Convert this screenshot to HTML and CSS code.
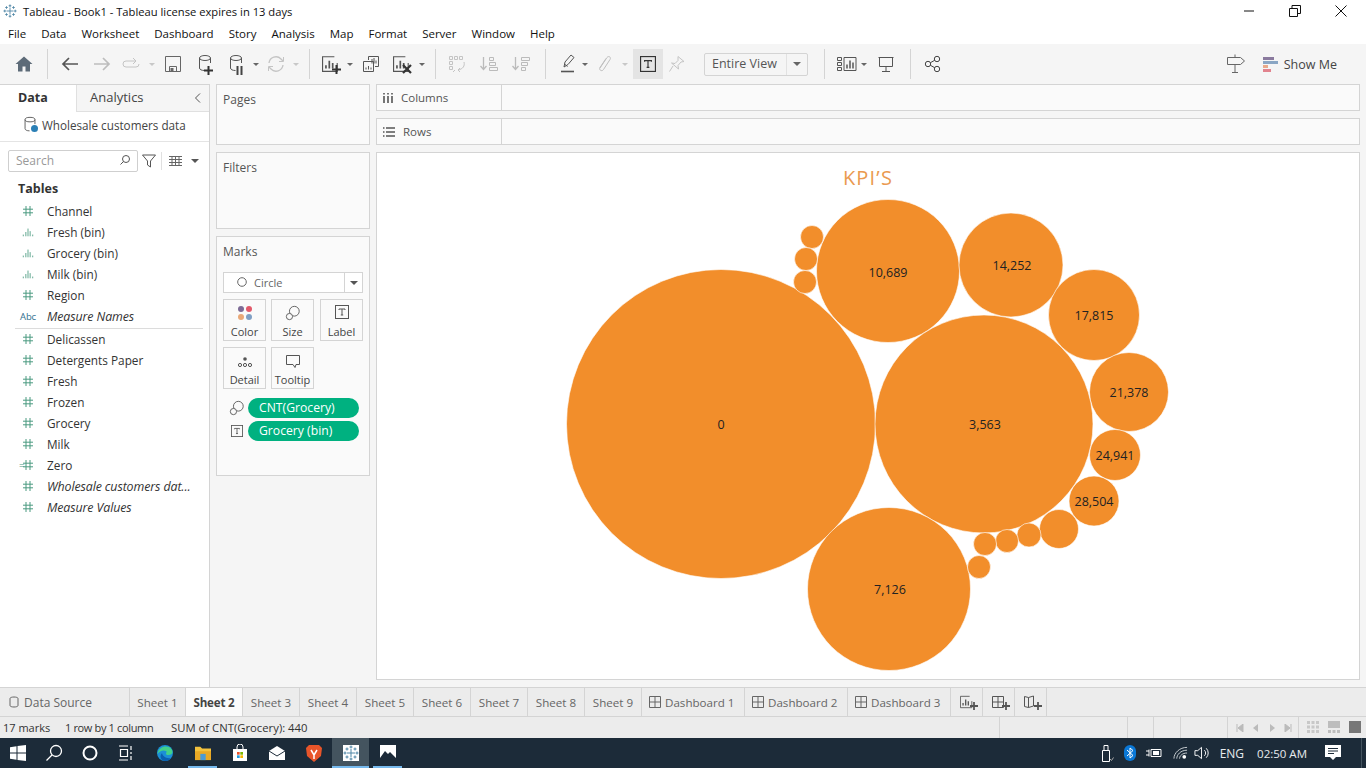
FILE: index.html
```html
<!DOCTYPE html>
<html lang="en">
<head>
  <meta charset="UTF-8" />
  <title>Tableau - Book1</title>
  <link rel="stylesheet" href="styles.css">
</head>
<body>
  <svg class="defs" width="0" height="0">
    <symbol id="logo" viewBox="0 0 16 16">
      <path d="M8 4v8M4 8h8M8 .5v3M6.500 2h3M8 12.500v3M6.500 14h3M.5 8h3M2 6.500v3M12.500 8h3M14 6.500v3M4 2.500v3M2.500 4h3M12 2.500v3M10.500 4h3M4 10.500v3M2.500 12h3M12 10.500v3M10.500 12h3" fill="none" stroke="#4f86a6" stroke-width="1"/>
    </symbol>
    <symbol id="hash" viewBox="0 0 12 12">
      <path d="M4 1v10M8 1v10M1 4.200h10M1 7.800h10" fill="none" stroke="#4a9a80" stroke-width="1"/>
    </symbol>
    <symbol id="bin" viewBox="0 0 14 12">
      <path d="M1.500 9v2M4.500 6v5M7 2v9M9.500 5v6M12.500 9v2" fill="none" stroke="#4a9a80" stroke-width="1"/>
    </symbol>
    <symbol id="size" viewBox="0 0 18 18">
      <circle cx="10.500" cy="7" r="5.500" fill="none" stroke="currentColor"/>
      <circle cx="5" cy="13" r="3.500" fill="#fafafa" stroke="currentColor"/>
    </symbol>
    <symbol id="tbox" viewBox="0 0 14 14">
      <rect x=".5" y=".5" width="13" height="13" fill="none" stroke="currentColor"/>
      <path d="M4 5V4h6v1M7 4v6M5.800 10h2.400" fill="none" stroke="currentColor"/>
    </symbol>
    <symbol id="chart" viewBox="2 2 16 16">
      <path d="M13 3.500H2.500v13h13V9" fill="none" stroke="currentColor"/>
      <path d="M5.500 14v-3M8.500 14V7M11.500 14v-5" fill="none" stroke="currentColor" stroke-width="1.500"/>
    </symbol>
    <symbol id="plus" viewBox="0 0 9 9">
      <path d="M4.500 0v9M0 4.500h9" stroke="currentColor" stroke-width="2"/>
    </symbol>
    <symbol id="cyl" viewBox="0 0 14 20">
      <ellipse cx="7" cy="4" rx="5.500" ry="2.500" fill="none" stroke="currentColor"/>
      <path d="M1.500 4v10c0 1.500 2 2.500 5 2.500M12.500 4v5" fill="none" stroke="currentColor"/>
    </symbol>
  </svg>

  <header class="titlebar">
    <svg class="title-logo"><use href="#logo"/></svg>
    <span class="title-text">Tableau - Book1 - Tableau license expires in 13 days</span>
    <div class="win-btns">
      <svg width="12" height="12" viewBox="0 0 12 12"><path d="M1 6h10" stroke="#111"/></svg>
      <svg width="12" height="12" viewBox="0 0 12 12"><path d="M.5 3.500h8v8h-8zM3 3.500v-3h8.500v8H8.500" fill="none" stroke="#111"/></svg>
      <svg width="12" height="12" viewBox="0 0 12 12"><path d="M.5.5l11 11M11.500.5l-11 11" stroke="#111"/></svg>
    </div>
  </header>

  <nav class="menubar">
    <span>File</span><span>Data</span><span>Worksheet</span><span>Dashboard</span><span>Story</span><span>Analysis</span><span>Map</span><span>Format</span><span>Server</span><span>Window</span><span>Help</span>
  </nav>

  <div class="toolbar">
    <div class="tb w32"><svg width="20" height="20" viewBox="0 0 20 20"><path d="M10 2.500L1.500 10H4v7.500h4.500v-5h3v5H16V10h2.500z" fill="#5d6b78"/></svg></div>
    <i class="sep s1"></i>
    <div class="tb w32"><svg width="20" height="20" viewBox="0 0 20 20"><path d="M18 10H3M9 4l-6 6 6 6" fill="none" stroke="#555" stroke-width="1.700"/></svg></div>
    <div class="tb w32"><svg width="20" height="20" viewBox="0 0 20 20"><path d="M2 10h15M11 4l6 6-6 6" fill="none" stroke="#bdbdbd" stroke-width="1.700"/></svg></div>
    <div class="tb w26"><svg width="20" height="20" viewBox="0 0 20 20"><path d="M14 7H5a3 3 0 0 0 0 6h10a3 3 0 0 0 3-3M12 4l3 3-3 3" fill="none" stroke="#c4c4c4"/></svg></div>
    <div class="tb w16"><b class="caret off"></b></div>
    <div class="tb w26"><svg width="16" height="16" viewBox="0 0 16 16"><path d="M.5.5h15v15H.5zM4.500 15.500v-5h7v5" fill="none" stroke="#666"/><rect x="5.500" y="12" width="3" height="3.500" fill="#666"/></svg></div>
    <div class="tb w38"><span class="stack"><svg class="ic" width="14" height="20"><use href="#cyl"/></svg><svg class="badge" width="9" height="9"><use href="#plus"/></svg></span></div>
    <div class="tb w24"><span class="stack"><svg class="ic" width="14" height="20"><use href="#cyl"/></svg><svg class="badge" width="9" height="9" viewBox="0 0 9 9"><path d="M2.500 0v9M6.500 0v9" stroke="#444" stroke-width="2"/></svg></span></div>
    <div class="tb w16"><b class="caret"></b></div>
    <div class="tb w24"><svg width="20" height="20" viewBox="0 0 20 20"><path d="M3 9a7 7 0 0 1 12-4l2 2M17 11a7 7 0 0 1-12 4l-2-2" fill="none" stroke="#c4c4c4" stroke-width="1.300"/><path d="M17.500 3v4.500H13M2.500 17v-4.500H7" fill="none" stroke="#c4c4c4"/></svg></div>
    <div class="tb w16"><b class="caret off"></b></div>
    <i class="sep s2"></i>
    <div class="tb w30"><span class="stack"><svg class="ic" width="18" height="18"><use href="#chart"/></svg><svg class="badge" width="9" height="9"><use href="#plus"/></svg></span></div>
    <div class="tb w8"><b class="caret"></b></div>
    <div class="tb w34"><svg width="20" height="20" viewBox="0 0 20 20"><path d="M7.500 6V2.500h10v10H14M2.500 7.500h10v10h-10z" fill="#f5f5f5" stroke="#555"/><path d="M11 9.500V5M13 9.500V4M15 9.500V6.500M5 15.500v-2M7.500 15.500v-3.500M10 15.500v-2" stroke="#555"/></svg></div>
    <div class="tb w28"><span class="stack"><svg class="ic" width="18" height="18"><use href="#chart"/></svg><svg class="badge" width="10" height="10" viewBox="0 0 10 10"><path d="M1 1l8 8M9 1L1 9" stroke="#333" stroke-width="2.200"/></svg></span></div>
    <div class="tb w12"><b class="caret"></b></div>
    <i class="sep s1"></i>
    <div class="tb w30"><svg width="20" height="20" viewBox="0 0 20 20"><path d="M2.500 2.500h3v3h-3zM7.500 2.500h3v3h-3zM12.500 2.500h3v3h-3zM2.500 7.500h3v3h-3zM2.500 12.500h3v3h-3z" fill="none" stroke="#c4c4c4"/><path d="M17 8c1 4-1 7-6 8M13 14l-2 2 2 2M6 18l2-2" fill="none" stroke="#c4c4c4"/></svg></div>
    <div class="tb w34"><svg width="20" height="20" viewBox="0 0 20 20"><path d="M4.500 3v12M1.500 12l3 3.500 3-3.500" fill="none" stroke="#bbb" stroke-width="1.300"/><path d="M10.500 3.500h4v3h-4zM10.500 8.500h6v3h-6zM10.500 13.500h8v3h-8z" fill="none" stroke="#bbb"/></svg></div>
    <div class="tb w30"><svg width="20" height="20" viewBox="0 0 20 20"><path d="M4.500 3v12M1.500 12l3 3.500 3-3.500" fill="none" stroke="#bbb" stroke-width="1.300"/><path d="M10.500 3.500h8v3h-8zM10.500 8.500h6v3h-6zM10.500 13.500h4v3h-4z" fill="none" stroke="#bbb"/></svg></div>
    <i class="sep s3"></i>
    <div class="tb w26"><svg width="20" height="22" viewBox="0 0 20 22"><path d="M6 14l1-5 6-7 3 2.500-6 7zM6.500 11l3 2.500" fill="none" stroke="#555"/><path d="M3 18.500h13" stroke="#555" stroke-width="1.600"/></svg></div>
    <div class="tb w8"><b class="caret"></b></div>
    <div class="tb w32"><svg width="18" height="20" viewBox="0 0 18 20"><path d="M4 14L11 3.500C12.500 1.500 15.500 3 14 5.500L7.500 15.500C6 18 2.500 16 4 13.500L10 4.500" fill="none" stroke="#bfbfbf"/></svg></div>
    <div class="tb w8"><b class="caret off"></b></div>
    <div class="tb w30 tb-on"><svg class="ic-dark" width="16" height="16"><use href="#tbox"/></svg></div>
    <div class="tb w28"><svg width="18" height="18" viewBox="0 0 18 18"><path d="M10 1.500l6 5-3 .5-3 3.500.5 3.500-7-6 3.500.5 3-3zM5 11l-3.500 5.500" fill="none" stroke="#c4c4c4"/></svg></div>
    <div class="fit-select"><span>Entire View</span><b class="caret"></b></div>
    <i class="sep s4"></i>
    <div class="tb w24"><svg width="20" height="16" viewBox="0 0 20 16"><path d="M.5 1.500h4v3h-4zM.5 6.500h4v3h-4zM.5 11.500h4v3h-4zM7 1.500h12v13H7z" fill="none" stroke="#555"/><path d="M10 12.500v-4M13 12.500v-8M16 12.500v-6" stroke="#555" stroke-width="1.500"/></svg></div>
    <div class="tb w10"><b class="caret"></b></div>
    <div class="tb w34"><svg width="20" height="20" viewBox="0 0 20 20"><path d="M2.500 3.500h15M3.500 3.500v9h13v-9M10 12.500v5M6 17.500h8" fill="none" stroke="#555"/></svg></div>
    <i class="sep s1b"></i>
    <div class="tb w30"><svg width="18" height="18" viewBox="0 0 18 18"><circle cx="4" cy="9" r="2.700" fill="none" stroke="#444"/><circle cx="13" cy="4" r="2.700" fill="none" stroke="#444"/><circle cx="13" cy="14" r="2.700" fill="none" stroke="#444"/><path d="M6.400 7.700l4.300-2.400M6.400 10.300l4.300 2.400" stroke="#444"/></svg></div>
    <div class="tb-right">
      <svg width="20" height="20" viewBox="0 0 20 20"><path d="M1.500 3.500h13l4 3.500-4 3.500h-13zM9 .5v3M9 10.500v8M6 18.500h6" fill="none" stroke="#666"/></svg>
      <div class="showme">
        <svg width="15" height="15" viewBox="0 0 15 15"><rect width="11" height="3" fill="#8a7a9e"/><rect y="4" width="15" height="3" fill="#8aa6c4"/><rect y="8" width="5" height="3" fill="#e9a98a"/><rect y="12" width="8" height="3" fill="#e2838e"/></svg>
        <span>Show Me</span>
      </div>
    </div>
  </div>

  <main class="main">
    <aside class="sidebar">
      <div class="side-tabs">
        <div class="side-tab active">Data</div>
        <div class="side-tab">Analytics</div>
        <svg class="collapse" width="8" height="10" viewBox="0 0 8 10"><path d="M6 .5L1.500 5 6 9.500" fill="none" stroke="#555"/></svg>
      </div>
      <div class="datasource">
        <span class="stack ds-icon"><svg class="ic" width="14" height="18"><use href="#cyl"/></svg><i class="ds-check"></i></span>
        <span>Wholesale customers data</span>
      </div>
      <div class="search-row">
        <div class="search">
          <span>Search</span>
          <svg width="12" height="12" viewBox="0 0 12 12"><circle cx="7" cy="5" r="3.500" fill="none" stroke="#555"/><path d="M4.500 7.500L1.500 10.500" stroke="#555"/></svg>
        </div>
        <svg class="filter-ic" width="14" height="14" viewBox="0 0 14 14"><path d="M.5 1h13L8.500 7v6l-3-2V7z" fill="none" stroke="#555"/></svg>
        <i class="search-sep"></i>
        <svg width="13" height="10" viewBox="0 0 13 10"><path d="M0 .5h13M0 3.500h13M0 6.500h13M0 9.500h13M3 0v10M6.500 0v10M10 0v10" stroke="#666" stroke-width="1" fill="none"/></svg>
        <b class="caret dark"></b>
      </div>
      <h3 class="tables-head">Tables</h3>
      <ul class="fields">
        <li><svg><use href="#hash"/></svg>Channel</li>
        <li><svg><use href="#bin"/></svg>Fresh (bin)</li>
        <li><svg><use href="#bin"/></svg>Grocery (bin)</li>
        <li><svg><use href="#bin"/></svg>Milk (bin)</li>
        <li><svg><use href="#hash"/></svg>Region</li>
        <li class="calc"><span class="abc">Abc</span>Measure Names</li>
      </ul>
      <hr class="fields-sep">
      <ul class="fields">
        <li><svg><use href="#hash"/></svg>Delicassen</li>
        <li><svg><use href="#hash"/></svg>Detergents Paper</li>
        <li><svg><use href="#hash"/></svg>Fresh</li>
        <li><svg><use href="#hash"/></svg>Frozen</li>
        <li><svg><use href="#hash"/></svg>Grocery</li>
        <li><svg><use href="#hash"/></svg>Milk</li>
        <li><span class="eq">=</span><svg><use href="#hash"/></svg>Zero</li>
        <li class="calc"><svg><use href="#hash"/></svg>Wholesale customers dat...</li>
        <li class="calc"><svg><use href="#hash"/></svg>Measure Values</li>
      </ul>
    </aside>

    <section class="cards">
      <div class="card pages"><h4>Pages</h4></div>
      <div class="card filters"><h4>Filters</h4></div>
      <div class="card marks">
        <h4>Marks</h4>
        <div class="mark-type">
          <svg width="10" height="10" viewBox="0 0 10 10"><circle cx="5" cy="5" r="4.300" fill="none" stroke="#666"/></svg>
          <span>Circle</span>
          <div class="mark-caret"><b class="caret dark"></b></div>
        </div>
        <div class="mark-grid">
          <div class="mark-btn">
            <svg width="16" height="16" viewBox="0 0 16 16"><circle cx="4" cy="4" r="3" fill="#7d6b96"/><circle cx="12" cy="4" r="3" fill="#e2596a"/><circle cx="4" cy="12" r="3" fill="#e9a878"/><circle cx="12" cy="12" r="3" fill="#7f9fc4"/></svg>
            <span>Color</span>
          </div>
          <div class="mark-btn"><svg class="ic" width="16" height="16"><use href="#size"/></svg><span>Size</span></div>
          <div class="mark-btn label-btn"><svg class="ic" width="14" height="14"><use href="#tbox"/></svg><span>Label</span></div>
          <div class="mark-btn">
            <svg width="16" height="16" viewBox="0 0 16 16"><circle cx="8" cy="6" r="1.800" fill="#555"/><circle cx="3" cy="12" r="1.600" fill="none" stroke="#555"/><circle cx="8" cy="12" r="1.600" fill="none" stroke="#555"/><circle cx="13" cy="12" r="1.600" fill="none" stroke="#555"/></svg>
            <span>Detail</span>
          </div>
          <div class="mark-btn">
            <svg width="16" height="16" viewBox="0 0 16 16"><path d="M1.500 2.500h13v9H11l-1 3-2-3H1.500z" fill="none" stroke="#555"/></svg>
            <span>Tooltip</span>
          </div>
        </div>
        <div class="pill-row"><svg class="ic" width="16" height="16"><use href="#size"/></svg><span class="pill">CNT(Grocery)</span></div>
        <div class="pill-row"><svg class="ic pill-t" width="12" height="12"><use href="#tbox"/></svg><span class="pill">Grocery (bin)</span></div>
      </div>
    </section>

    <section class="work">
      <div class="shelf">
        <div class="shelf-label">
          <svg width="10" height="10" viewBox="0 0 10 10"><path d="M1 0v1.500M5 0v1.500M9 0v1.500M1 3v7M5 3v7M9 3v7" stroke="#555" stroke-width="1.600"/></svg>
          <span>Columns</span>
        </div>
      </div>
      <div class="shelf">
        <div class="shelf-label">
          <svg width="12" height="10" viewBox="0 0 12 10"><path d="M0 1h1.500M3 1h9M0 5h1.500M3 5h9M0 9h1.500M3 9h9" stroke="#555" stroke-width="1.600"/></svg>
          <span>Rows</span>
        </div>
      </div>
      <div class="viz">
        <svg class="chart" viewBox="376 152 984 528" width="984" height="528">
          <text class="kpi" x="868" y="185">KPI’S</text>
          <g class="bubbles">
            <circle cx="721" cy="424" r="154.500"/>
            <circle cx="888" cy="271" r="71.500"/>
            <circle cx="1011" cy="265" r="52"/>
            <circle cx="1094" cy="315" r="45.500"/>
            <circle cx="1129" cy="392" r="39.500"/>
            <circle cx="1115" cy="455" r="25.500"/>
            <circle cx="1094" cy="501" r="25"/>
            <circle cx="984" cy="424" r="109"/>
            <circle cx="889" cy="589" r="81.500"/>
            <circle cx="812" cy="237" r="11.500"/>
            <circle cx="806" cy="259" r="11.500"/>
            <circle cx="805" cy="282" r="11.500"/>
            <circle cx="1059" cy="529" r="19.500"/>
            <circle cx="1029" cy="535" r="12"/>
            <circle cx="1007" cy="541" r="11.500"/>
            <circle cx="985" cy="544" r="11.500"/>
            <circle cx="979" cy="567" r="11.500"/>
          </g>
          <g class="labels">
            <text x="721" y="429">0</text>
            <text x="888" y="277">10,689</text>
            <text x="1012" y="270">14,252</text>
            <text x="1094" y="320">17,815</text>
            <text x="1129" y="397">21,378</text>
            <text x="1115" y="460">24,941</text>
            <text x="1094" y="506">28,504</text>
            <text x="985" y="429">3,563</text>
            <text x="890" y="594">7,126</text>
          </g>
        </svg>
      </div>
    </section>
  </main>

  <div class="tabbar">
    <div class="tab ds-tab"><svg class="ic" width="10" height="12" viewBox="0 0 10 12"><path d="M1 2.500C1 .5 9 .5 9 2.500v7c0 2-8 2-8 0z" fill="none" stroke="#666"/></svg>Data Source</div>
    <div class="tab sheet first">Sheet 1</div>
    <div class="tab sheet current">Sheet 2</div>
    <div class="tab sheet">Sheet 3</div>
    <div class="tab sheet">Sheet 4</div>
    <div class="tab sheet">Sheet 5</div>
    <div class="tab sheet">Sheet 6</div>
    <div class="tab sheet">Sheet 7</div>
    <div class="tab sheet">Sheet 8</div>
    <div class="tab sheet">Sheet 9</div>
    <div class="tab dash"><svg width="12" height="12" viewBox="0 0 12 12"><path d="M.5.5h11v11H.5zM6 .5v11M.5 6h11" fill="none" stroke="#666"/></svg>Dashboard 1</div>
    <div class="tab dash"><svg width="12" height="12" viewBox="0 0 12 12"><path d="M.5.5h11v11H.5zM6 .5v11M.5 6h11" fill="none" stroke="#666"/></svg>Dashboard 2</div>
    <div class="tab dash"><svg width="12" height="12" viewBox="0 0 12 12"><path d="M.5.5h11v11H.5zM6 .5v11M.5 6h11" fill="none" stroke="#666"/></svg>Dashboard 3</div>
    <div class="tab add"><span class="stack"><svg class="ic" width="14" height="14"><use href="#chart"/></svg><svg class="badge" width="8" height="8"><use href="#plus"/></svg></span></div>
    <div class="tab add"><span class="stack"><svg class="ic" width="14" height="14" viewBox="0 0 14 14"><path d="M.5 1.500h11v11H.5zM6 1.500v11M.5 7h11" fill="none" stroke="#555"/></svg><svg class="badge" width="8" height="8"><use href="#plus"/></svg></span></div>
    <div class="tab add"><span class="stack"><svg class="ic" width="14" height="14" viewBox="0 0 14 14"><path d="M.5 1.500l4 1 5-1.500v10l-5 1.500-4-1zM4.500 2.500v10" fill="none" stroke="#555"/></svg><svg class="badge" width="8" height="8"><use href="#plus"/></svg></span></div>
  </div>

  <footer class="statusbar">
    <span class="st-marks">17 marks</span>
    <span class="st-rows">1 row by 1 column</span>
    <span>SUM of CNT(Grocery): 440</span>
    <div class="st-cells">
      <i class="c1"></i><i class="c2"></i><i class="c3"></i><i class="c4"></i>
      <div class="st-nav">
        <svg width="8" height="8" viewBox="0 0 8 8"><path d="M1 0v8M7 0v8L2 4z" stroke="#bbb" fill="#bbb"/></svg>
        <svg width="8" height="8" viewBox="0 0 8 8"><path d="M6 0v8L1 4z" fill="#bbb"/></svg>
        <svg width="8" height="8" viewBox="0 0 8 8"><path d="M2 0v8l5-4z" fill="#bbb"/></svg>
        <svg width="8" height="8" viewBox="0 0 8 8"><path d="M7 0v8M1 0v8l5-4z" stroke="#bbb" fill="#bbb"/></svg>
      </div>
      <div class="st-view">
        <svg width="12" height="12" viewBox="0 0 12 12"><path d="M0 0h3v3H0zM4.500 0h3v3h-3zM9 0h3v3H9zM0 4.500h3v3H0zM4.500 4.500h3v3h-3zM9 4.500h3v3H9zM0 9h3v3H0zM4.500 9h3v3h-3zM9 9h3v3H9z" fill="#c8c8c8"/></svg>
        <svg width="12" height="12" viewBox="0 0 12 12"><path d="M0 0h12v7H0zM0 9h3v3H0zM4.500 9h3v3h-3zM9 9h3v3H9z" fill="#bdbdbd"/></svg>
        <svg width="12" height="12" viewBox="0 0 12 12"><path d="M0 0h12v12H0z" fill="#777"/></svg>
      </div>
    </div>
  </footer>

  <div class="taskbar">
    <div class="task narrow"><svg width="16" height="16" viewBox="0 0 16 16"><path d="M0 2.200L6.500 1.300v6.200H0zM7.500 1.100L16 0v7.500H7.500zM0 8.500h6.500v6.200L0 13.800zM7.500 8.500H16V16l-8.500-1.100z" fill="#fff"/></svg></div>
    <div class="task narrow"><svg width="18" height="18" viewBox="0 0 18 18"><circle cx="11" cy="7" r="5.500" fill="none" stroke="#fff" stroke-width="1.300"/><path d="M7 11l-5.500 5.500" stroke="#fff" stroke-width="1.300"/></svg></div>
    <div class="task narrow"><svg width="16" height="16" viewBox="0 0 16 16"><circle cx="8" cy="8" r="6.500" fill="none" stroke="#fff" stroke-width="2"/></svg></div>
    <div class="task narrow"><svg width="16" height="16" viewBox="0 0 16 16"><path d="M1 1h9M1 15h9M2.500 4.500h7v7h-7zM13 1v4M13 7v2M13 11v4" fill="none" stroke="#fff" stroke-width="1.200"/></svg></div>
    <div class="task edge"><svg width="18" height="18" viewBox="0 0 18 18"><circle cx="9" cy="9" r="8" fill="#1b8fd6"/><path d="M1.500 10C2 5 6 2.500 10 2.500c4 0 6.500 3 6.500 5.500 0 2-2 3-4 3-1.500 0-2.500-.5-2.500-1.500S11.500 8 10 7C7 5.500 3.500 7 1.500 10z" fill="#42d18a"/><path d="M6 16c-2-2-2-5 0-7 .5 3 4 6 9 5-2 3-6 4-9 2z" fill="#0a5fb0"/></svg></div>
    <div class="task under"><svg width="18" height="16" viewBox="0 0 20 18"><path d="M1 2h6l2 2h10v13H1z" fill="#f3c23d"/><path d="M1 7h18v10H1z" fill="#e8a925"/><path d="M7 10h6v7H7z" fill="#4a9bd6"/></svg></div>
    <div class="task"><svg width="16" height="18" viewBox="0 0 16 18"><path d="M1 5h14v12H1z" fill="#fff"/><path d="M5 5V3a3 3 0 0 1 6 0v2" fill="none" stroke="#fff"/><path d="M5 8h2.700v2.700H5z" fill="#e8532b"/><path d="M8.300 8H11v2.700H8.300z" fill="#7db700"/><path d="M5 11.300h2.700V14H5z" fill="#1e9be0"/><path d="M8.300 11.300H11V14H8.300z" fill="#f7b500"/></svg></div>
    <div class="task"><svg width="16" height="14" viewBox="0 0 16 14"><path d="M0 5l8-5 8 5v9H0z" fill="#fff"/><path d="M0 5l8 5 8-5" fill="none" stroke="#1c2b39"/></svg></div>
    <div class="task"><svg width="16" height="18" viewBox="0 0 16 18"><path d="M3 1h10l3 3-1 8-7 6-7-6-1-8z" fill="#e8552a"/><path d="M5 6l3 5 3-5M8 11v4" fill="none" stroke="#fff" stroke-width="1.500"/></svg></div>
    <div class="task running"><svg width="16" height="16" viewBox="0 0 16 16"><rect width="16" height="16" fill="#fff"/><use href="#logo"/></svg></div>
    <div class="task under"><svg width="16" height="16" viewBox="0 0 16 16"><rect width="16" height="16" fill="#fff"/><path d="M0 13l5-7 3 3 2-2 6 6v3H0z" fill="#1c2b39"/></svg></div>
    <div class="tray">
      <svg class="t-usb" width="13" height="17" viewBox="0 0 13 17"><path d="M1.500 5.500h7v11h-7zM3 5.500v-5h4v5" fill="none" stroke="#fff"/><path d="M9 14l1.500 1.500 2-3" fill="none" stroke="#aaa"/></svg>
      <span class="bt"><svg width="8" height="12" viewBox="0 0 8 12"><path d="M1 3l6 5.500L4 11V1l3 2.500L1 9" fill="none" stroke="#fff"/></svg></span>
      <svg class="t-power" width="16" height="12" viewBox="0 0 16 12"><path d="M5 2.500h10v7H5zM0 4h3M0 8h3M3 2.500v7" fill="none" stroke="#fff"/><path d="M7 4h6v4H7z" fill="#fff"/></svg>
      <svg class="t-wifi" width="15" height="14" viewBox="0 0 16 14"><path d="M1 13C1 7 7 1 15 1M4 13c0-4 4-9 11-9M7 13c0-3 3-6 8-6" fill="none" stroke="#cfd4d8"/><circle cx="12" cy="11" r="2" fill="#fff"/></svg>
      <svg class="t-vol" width="16" height="14" viewBox="0 0 17 14"><path d="M1 4.500h3L8 1v12L4 9.500H1z" fill="none" stroke="#fff"/><path d="M11 4a4 4 0 0 1 0 6M13 2a7 7 0 0 1 0 10" fill="none" stroke="#fff"/></svg>
      <span class="tray-text eng">ENG</span>
      <span class="tray-text clock">02:50 AM</span>
      <svg class="notify" width="16" height="16" viewBox="0 0 16 16"><path d="M0 0h16v12h-5l-3 3-3-3H0z" fill="#fff"/><path d="M3 3.500h10M3 6h10M3 8.500h6" stroke="#1c2b39"/></svg>
      <i class="desk-line"></i>
    </div>
  </div>
</body>
</html>
```

FILE: styles.css
```css
* { box-sizing: border-box; }
html, body { height: 100%; }
body {
  margin: 0;
  height: 768px;
  overflow: hidden;
  display: flex;
  flex-direction: column;
  font-family: 'Open Sans', 'Noto Sans', sans-serif;
  font-size: 12px;
  color: #444;
  background: #fff;
}
.defs { position: absolute; }
ul { list-style: none; margin: 0; padding: 0; }
h3, h4 { margin: 0; }

/* window chrome */
.titlebar {
  height: 22px;
  display: flex;
  align-items: center;
  padding-left: 3px;
  color: #111;
  flex: none;
}
.title-logo { width: 14px; height: 14px; margin-right: 6px; }
.title-text { font-size: 11.200px; }
.win-btns {
  margin-left: auto;
  display: flex;
  gap: 34px;
  padding-right: 19px;
}
.menubar {
  height: 22px;
  display: flex;
  align-items: center;
  gap: 15px;
  padding-left: 8px;
  color: #111;
  font-size: 11.500px;
  flex: none;
}

/* toolbar */
.toolbar {
  height: 40px;
  display: flex;
  align-items: center;
  padding-left: 8px;
  background: #f5f5f5;
  flex: none;
}
.tb {
  height: 30px;
  display: flex;
  align-items: center;
  justify-content: center;
  flex: none;
}
.w8 { width: 8px; }
.w10 { width: 10px; }
.w12 { width: 12px; }
.w16 { width: 16px; }
.w24 { width: 24px; }
.w26 { width: 26px; }
.w28 { width: 28px; }
.w30 { width: 30px; }
.w32 { width: 32px; }
.w34 { width: 34px; }
.w38 { width: 38px; }
.tb-on { background: #e4e4e4; margin-left: 4px; height: 30px; }
.ic-dark { color: #333; }
.ic { color: #555; }
.sep { width: 1px; height: 30px; background: #d4d4d4; flex: none; }
.s1 { margin: 0 6px 0 7px; }
.s1b { margin: 0 7px 0 7px; }
.s2 { margin: 0 6px 0 5px; }
.s3 { margin: 0 9px 0 9px; }
.s4 { margin: 0 10px 0 16px; }
.caret {
  display: block;
  width: 0;
  height: 0;
  border-left: 3px solid transparent;
  border-right: 3px solid transparent;
  border-top: 3px solid #666;
}
.caret.off { border-top-color: #c8c8c8; }
.caret.dark { border-left-width: 4px; border-right-width: 4px; border-top: 4px solid #555; }
.stack { position: relative; display: inline-flex; color: #555; }
.badge { position: absolute; right: -1px; bottom: -1px; color: #333; }
.fit-select {
  width: 104px;
  height: 23px;
  margin-left: 13px;
  display: flex;
  align-items: center;
  border: 1px solid #d4d4d4;
  border-radius: 2px;
  font-size: 12.500px;
  color: #555;
  flex: none;
}
.fit-select span {
  flex: 1;
  padding-left: 7px;
  border-right: 1px solid #e2e2e2;
  height: 21px;
  line-height: 19px;
}
.fit-select .caret { margin: 0 6px; border-left-width: 4px; border-right-width: 4px; border-top-width: 4px; }
.tb-right {
  margin-left: auto;
  display: flex;
  align-items: center;
  gap: 17px;
  padding-right: 29px;
}
.showme {
  display: flex;
  align-items: center;
  gap: 6px;
  font-size: 12.500px;
  color: #444;
}

/* main area */
.main {
  flex: 1;
  min-height: 0;
  display: flex;
  background: #f5f5f5;
}
.sidebar {
  width: 210px;
  flex: none;
  background: #fff;
  border-right: 1px solid #d4d4d4;
  border-top: 1px solid #d4d4d4;
}
.side-tabs {
  height: 27px;
  display: flex;
  align-items: center;
  position: relative;
  background: #f5f5f5;
  border-bottom: 1px solid #e0e0e0;
}
.side-tab {
  height: 27px;
  line-height: 25px;
  font-size: 13px;
  padding-left: 13px;
  width: 80px;
}
.side-tab.active {
  width: 77px;
  padding-left: 18px;
  background: #fff;
  font-weight: 700;
  font-size: 12.500px;
  color: #333;
  border-right: 1px solid #e0e0e0;
}
.collapse { position: absolute; right: 7px; top: 8px; }
.datasource {
  height: 30px;
  display: flex;
  align-items: center;
  gap: 5px;
  padding: 0 0 4px 23px;
  font-size: 11.700px;
  border-bottom: 1px solid #e4e4e4;
}
.ds-icon { width: 14px; height: 18px; }
.ds-check {
  position: absolute;
  right: -1px;
  bottom: 2px;
  width: 7px;
  height: 7px;
  border-radius: 50%;
  background: #2a7fb5;
}
.search-row {
  display: flex;
  align-items: center;
  height: 22px;
  margin: 8px 0 0 8px;
}
.search {
  width: 130px;
  height: 22px;
  display: flex;
  align-items: center;
  justify-content: space-between;
  padding: 0 6px 2px 7px;
  border: 1px solid #cfcfcf;
  border-radius: 2px;
  color: #999;
}
.filter-ic { margin-left: 4px; }
.search-sep { width: 1px; height: 18px; background: #e0e0e0; margin: 0 7px 0 5px; }
.search-row .caret { margin-left: 9px; }
.tables-head {
  font-size: 12.500px;
  font-weight: 700;
  color: #333;
  margin: 7px 0 0 18px;
  height: 22px;
  line-height: 20px;
}
.fields li {
  height: 21px;
  display: flex;
  align-items: center;
  padding: 0 0 2px 47px;
  position: relative;
  font-size: 11.800px;
  color: #333;
  white-space: nowrap;
}
.fields svg {
  position: absolute;
  left: 22px;
  top: 4px;
  width: 12px;
  height: 12px;
}
.fields .calc { font-style: italic; font-size: 12.400px; letter-spacing: -.1px; padding-bottom: 0; }
.abc {
  position: absolute;
  left: 20px;
  font-size: 9.500px;
  font-style: normal;
  color: #2f6f8f;
}
.eq { position: absolute; left: 19px; font-size: 10px; color: #4a9a80; }
.fields-sep {
  margin: 1px 6px 0 15px;
  border: 0;
  border-top: 1px solid #dcdcdc;
  height: 1px;
}

/* pages, filters, marks */
.cards {
  width: 154px;
  flex: none;
  margin: 0 0 0 6px;
  display: flex;
  flex-direction: column;
  gap: 7px;
}
.card {
  border: 1px solid #d4d4d4;
  padding: 0 6px;
  background: #fafafa;
}
.card h4 {
  font-weight: 400;
  font-size: 12px;
  color: #555;
  height: 29px;
  line-height: 30px;
}
.pages { height: 61px; }
.filters { height: 77px; }
.marks { height: 240px; }
.marks h4 { height: 35px; }
.mark-type {
  height: 21px;
  display: flex;
  align-items: center;
  gap: 7px;
  padding: 0 0 1px 13px;
  border: 1px solid #d4d4d4;
  background: #fff;
  color: #666;
  font-size: 11px;
  position: relative;
}
.mark-caret {
  position: absolute;
  right: 0;
  top: 0;
  width: 18px;
  height: 19px;
  border-left: 1px solid #d4d4d4;
  display: flex;
  align-items: center;
  justify-content: center;
}
.mark-grid {
  display: grid;
  grid-template-columns: 43px 43px 44px;
  grid-auto-rows: 42px;
  column-gap: 5px;
  row-gap: 6px;
  margin: 6px 0 9px;
}
.mark-btn {
  border: 1px solid #d4d4d4;
  display: flex;
  flex-direction: column;
  align-items: center;
  justify-content: space-between;
  padding: 5px 0 1px;
  font-size: 11px;
  color: #444;
  background: #fafafa;
  white-space: nowrap;
}
.label-btn { margin-left: 1px; }
.pill-row {
  display: flex;
  align-items: center;
  height: 20px;
  margin-bottom: 3px;
}
.pill-row .ic { width: 16px; margin: 0 3px 0 6px; flex: none; }
.pill-row .pill-t { width: 12px; margin: 0 5px 0 8px; }
.pill {
  width: 111px;
  height: 20px;
  line-height: 19px;
  padding-left: 11px;
  border-radius: 10px;
  background: #00b180;
  color: #fff;
  font-size: 12.200px;
}

/* columns, rows, view */
.work {
  flex: 1;
  min-width: 0;
  margin: 0 6px 7px 6px;
  display: flex;
  flex-direction: column;
  gap: 7px;
}
.shelf {
  height: 27px;
  border: 1px solid #d4d4d4;
  background: #fafafa;
  flex: none;
}
.shelf-label {
  width: 125px;
  height: 25px;
  display: flex;
  align-items: center;
  gap: 8px;
  padding-left: 6px;
  font-size: 11.500px;
  color: #555;
  border-right: 1px solid #d4d4d4;
}
.viz {
  flex: 1;
  min-height: 0;
  border: 1px solid #d4d4d4;
  background: #fff;
  overflow: hidden;
}
.chart { display: block; margin: -1px; }
.kpi {
  font-size: 20px;
  letter-spacing: 1.200px;
  fill: #ea9a50;
  text-anchor: middle;
}
.bubbles circle { fill: #f28e2b; stroke: #fff; stroke-opacity: .6; }
.labels text {
  font-size: 12.500px;
  fill: #222;
  text-anchor: middle;
}

/* bottom tabs and status */
.tabbar {
  height: 30px;
  display: flex;
  background: #ececec;
  border-top: 1px solid #d4d4d4;
  border-bottom: 1px solid #d4d4d4;
  flex: none;
}
.tab {
  display: flex;
  align-items: center;
  gap: 5px;
  padding: 0 7px;
  color: #666;
  border-right: 1px solid #d4d4d4;
  font-size: 11.600px;
  white-space: nowrap;
  flex: none;
}
.ds-tab { width: 130px; padding-left: 9px; font-size: 12px; }
.sheet { width: 57px; padding: 0; justify-content: center; }
.sheet.first { width: 56px; }
.tab.current { background: #fbfbfb; font-weight: 700; color: #444; letter-spacing: -.2px; }
.dash { width: 103px; padding: 0 0 0 7px; gap: 4px; }
.tab.add { width: 32px; padding: 0 0 0 9px; }
.tab.add .badge { color: #555; right: -4px; }
.statusbar {
  height: 21px;
  display: flex;
  align-items: center;
  padding-left: 3px;
  background: #ececec;
  font-size: 11.300px;
  color: #333;
  position: relative;
  flex: none;
}
.st-marks { width: 62px; font-size: 11px; }
.st-rows { width: 106px; font-size: 11px; letter-spacing: -.35px; }
.st-cells i {
  position: absolute;
  top: 0;
  width: 1px;
  height: 21px;
  background: #d4d4d4;
}
.c1 { left: 999px; }
.c2 { left: 1127px; }
.c3 { left: 1153px; }
.c4 { left: 1180px; }
.st-nav {
  position: absolute;
  left: 1227px;
  top: 0;
  width: 72px;
  height: 21px;
  display: flex;
  align-items: center;
  gap: 8px;
  padding-left: 8px;
  border-left: 1px solid #d4d4d4;
  border-right: 1px solid #d4d4d4;
}
.st-view {
  position: absolute;
  left: 1307px;
  top: 4px;
  display: flex;
  gap: 9px;
}

/* windows taskbar */
.taskbar {
  height: 30px;
  display: flex;
  align-items: center;
  background: #1c2b39;
  color: #fff;
  flex: none;
}
.task {
  width: 37px;
  height: 30px;
  display: flex;
  align-items: center;
  justify-content: center;
  position: relative;
  flex: none;
}
.task.narrow { width: 36px; }
.task.edge { width: 38px; margin-left: 2px; }
.task.under::after {
  content: "";
  position: absolute;
  left: 4px;
  right: 4px;
  bottom: 0;
  height: 2px;
  background: #76b9ed;
}
.task.running { background: #44545f; box-shadow: inset 0 -2px 0 #76b9ed; }
.tray {
  margin-left: auto;
  height: 30px;
  display: flex;
  align-items: center;
  padding-right: 4px;
}
.bt {
  width: 12px;
  height: 16px;
  border-radius: 6px;
  background: #0a78d7;
  display: flex;
  align-items: center;
  justify-content: center;
  margin-left: 10px;
}
.t-power { margin-left: 10px; }
.t-wifi { margin-left: 11px; }
.t-vol { margin-left: 6px; }
.tray-text { font-size: 11.500px; color: #e8ecef; white-space: nowrap; }
.eng { margin-left: 10px; font-size: 12px; }
.clock { margin-left: 13px; }
.notify { margin-left: 18px; }
.desk-line { width: 1px; height: 30px; background: #44545f; margin-left: 20px; }
```
